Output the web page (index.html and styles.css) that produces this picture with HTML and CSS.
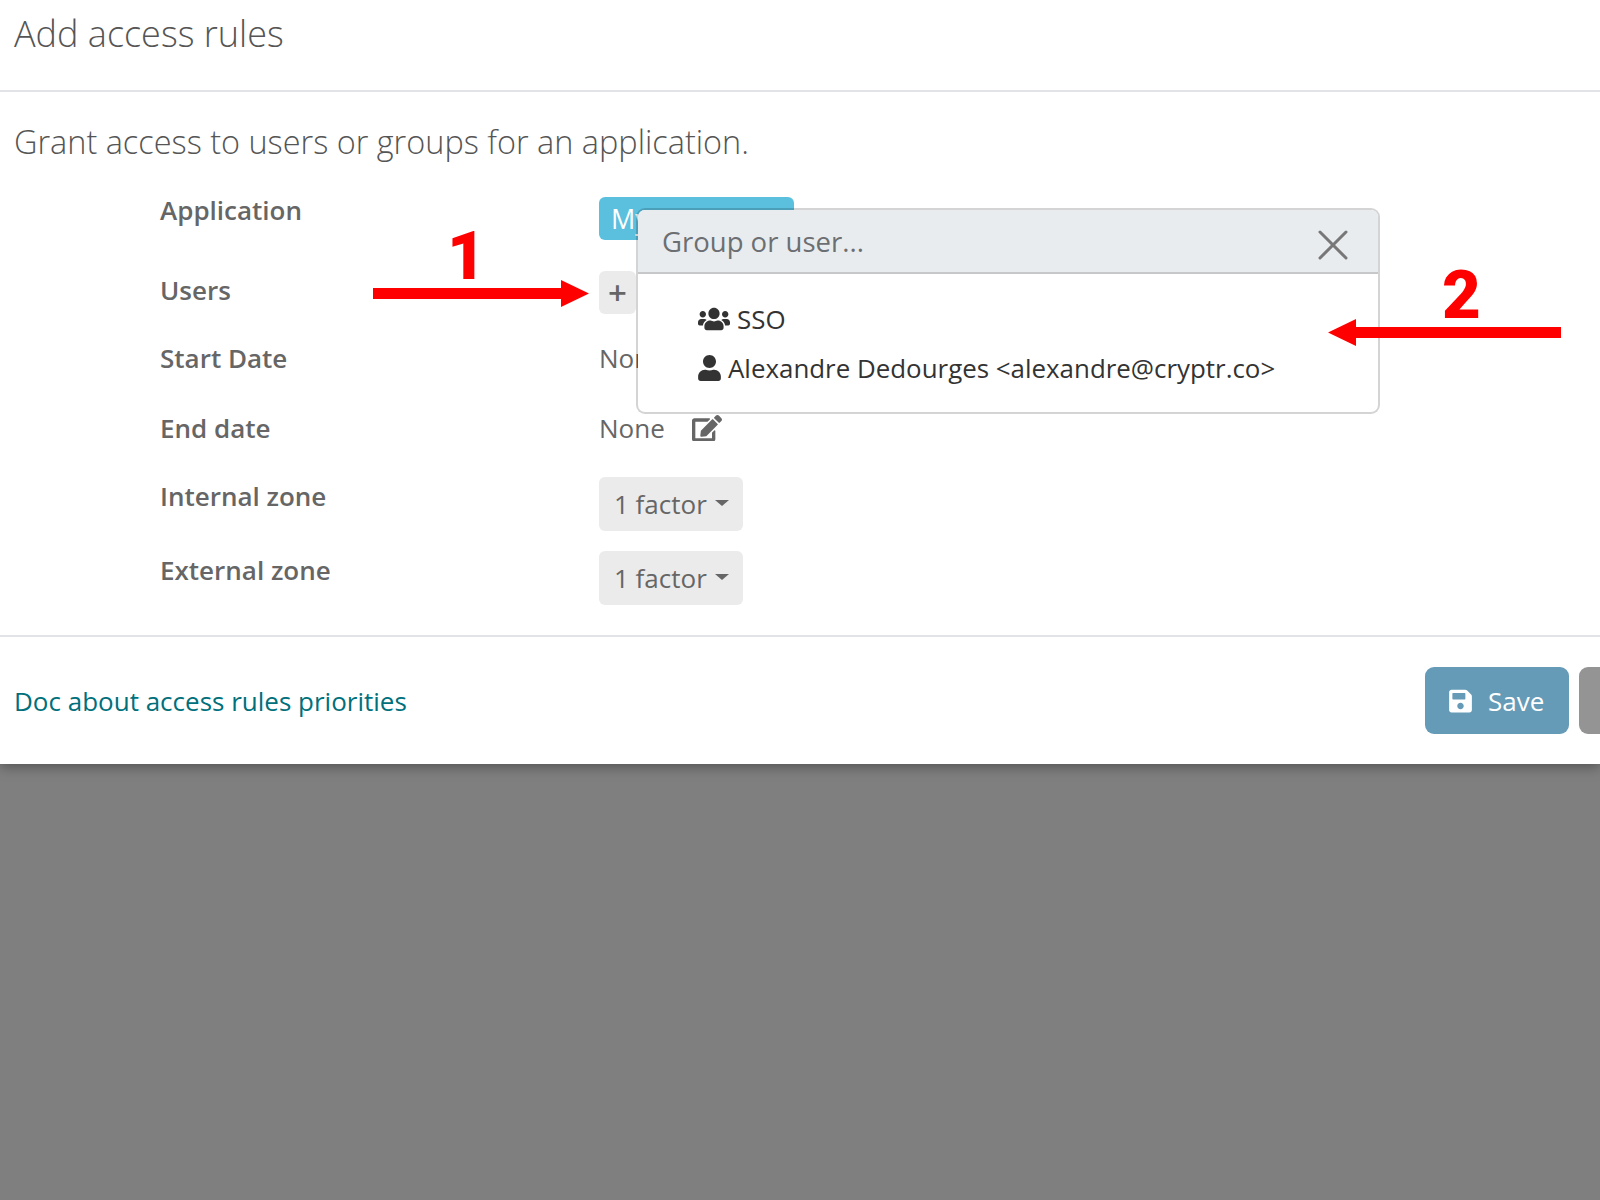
FILE: index.html
```html
<!DOCTYPE html>
<html lang="en">
<head>
<meta charset="utf-8">
<title>Add access rules</title>
<link rel="stylesheet" href="styles.css">
</head>
<body>
<div class="modal">
  <header class="modal-header"><h1 class="modal-title">Add access rules</h1></header>
  <main class="modal-body">
    <p class="intro">Grant access to users or groups for an application.</p>
    <div class="form">
      <div class="label label-top">Application</div>
      <div><span class="tag">My app</span></div>
      <div class="label">Users</div>
      <div><button class="btn btn-plus" aria-label="Add">+</button></div>
      <div class="label">Start Date</div>
      <div class="value">None</div>
      <div class="label">End date</div>
      <div class="value">None
        <svg class="icon-edit" viewBox="0 0 576 512"><path fill="currentColor" d="M402.6 83.2l90.2 90.2c3.8 3.8 3.8 10 0 13.8L274.4 405.6l-92.8 10.3c-12.4 1.4-22.9-9.1-21.5-21.5l10.3-92.8L388.8 83.2c3.8-3.8 10-3.8 13.8 0zm162-22.9l-48.8-48.8c-15.2-15.2-39.9-15.2-55.2 0l-35.4 35.4c-3.8 3.8-3.8 10 0 13.8l90.2 90.2c3.8 3.8 10 3.8 13.8 0l35.4-35.4c15.2-15.3 15.2-40 0-55.2zM384 346.2V448H64V128h229.8c3.2 0 6.2-1.3 8.5-3.5l40-40c7.6-7.6 2.2-20.5-8.5-20.5H48C21.5 64 0 85.5 0 112v352c0 26.5 21.5 48 48 48h352c26.5 0 48-21.5 48-48V306.2c0-10.7-12.9-16-20.5-8.5l-40 40c-2.2 2.3-3.5 5.3-3.5 8.5z"/></svg>
      </div>
      <div class="label">Internal zone</div>
      <div><button class="btn btn-factor">1 factor<span class="caret"></span></button></div>
      <div class="label">External zone</div>
      <div><button class="btn btn-factor">1 factor<span class="caret"></span></button></div>
    </div>
  </main>
  <footer class="modal-footer">
    <a class="doc-link" href="#">Doc about access rules priorities</a>
    <button class="btn-save">
      <svg class="icon-save" viewBox="0 0 448 512"><path fill="currentColor" d="M433.941 129.941l-83.882-83.882A48 48 0 0 0 316.118 32H48C21.49 32 0 53.49 0 80v352c0 26.51 21.49 48 48 48h352c26.51 0 48-21.49 48-48V163.882a48 48 0 0 0-14.059-33.941zM224 416c-35.346 0-64-28.654-64-64 0-35.346 28.654-64 64-64s64 28.654 64 64c0 35.346-28.654 64-64 64zm96-304.52V212c0 6.627-5.373 12-12 12H76c-6.627 0-12-5.373-12-12V108c0-6.627 5.373-12 12-12h228.52c3.183 0 6.235 1.264 8.485 3.515l3.48 3.48A11.996 11.996 0 0 1 320 111.48z"/></svg>
      Save
    </button>
    <button class="btn-cancel" aria-label="Cancel"></button>
  </footer>
</div>

<div class="popover">
  <div class="popover-head">
    <span class="placeholder">Group or user...</span>
    <svg class="icon-close" viewBox="0 0 30 30"><path d="M2 2 L28 28 M28 2 L2 28" stroke="currentColor" stroke-width="3" stroke-linecap="round" fill="none"/></svg>
  </div>
  <ul class="results">
    <li class="result">
      <svg class="icon-users" viewBox="0 0 640 512"><path fill="currentColor" d="M96 224c35.3 0 64-28.7 64-64s-28.7-64-64-64-64 28.7-64 64 28.7 64 64 64zm448 0c35.3 0 64-28.7 64-64s-28.7-64-64-64-64 28.7-64 64 28.7 64 64 64zm32 32h-64c-17.6 0-33.5 7.1-45.1 18.6 40.3 22.1 68.9 62 75.1 109.4h66c17.7 0 32-14.3 32-32v-32c0-35.3-28.7-64-64-64zm-256 0c61.9 0 112-50.1 112-112S381.9 32 320 32 208 82.1 208 144s50.1 112 112 112zm76.8 32h-8.3c-20.8 10-43.9 16-68.5 16s-47.6-6-68.5-16h-8.3C179.6 288 128 339.6 128 403.2V432c0 26.5 21.5 48 48 48h288c26.5 0 48-21.5 48-48v-28.8c0-63.6-51.6-115.2-115.2-115.2zm-223.7-13.4C161.5 263.1 145.6 256 128 256H64c-35.3 0-64 28.7-64 64v32c0 17.7 14.3 32 32 32h65.9c6.3-47.4 34.9-87.3 75.2-109.4z"/></svg>
      SSO
    </li>
    <li class="result">
      <svg class="icon-user" viewBox="0 0 448 512"><path fill="currentColor" d="M224 256c70.7 0 128-57.3 128-128S294.7 0 224 0 96 57.3 96 128s57.3 128 128 128zm89.6 32h-16.7c-22.2 10.2-46.9 16-72.9 16s-50.6-5.8-72.9-16h-16.7C60.2 288 0 348.2 0 422.4V464c0 26.5 21.5 48 48 48h352c26.5 0 48-21.5 48-48v-41.6c0-74.2-60.2-134.4-134.4-134.4z"/></svg>
      Alexandre Dedourges &lt;alexandre@cryptr.co&gt;
    </li>
  </ul>
</div>

<div class="note note-one">
  <span class="note-num">1</span>
  <svg class="arrow" viewBox="0 0 216 27"><path fill="#ff0000" d="M0 8H188V0L216 13.5 188 27V19H0Z"/></svg>
</div>
<div class="note note-two">
  <span class="note-num">2</span>
  <svg class="arrow" viewBox="0 0 233 27"><path fill="#ff0000" d="M233 8H28V0L0 13.5 28 27V19H233Z"/></svg>
</div>
</body>
</html>
```
FILE: styles.css
```css
* { box-sizing: border-box; }
html, body { margin: 0; height: 100%; }
body {
  background: #7f7f7f;
  font-family: "Open Sans", sans-serif;
  color: #666;
  overflow: hidden;
  position: relative;
}
.modal {
  height: 764px;
  background: #fff;
  display: flex;
  flex-direction: column;
  box-shadow: 0 3px 12px rgba(0,0,0,.35);
}
.modal-header {
  height: 92px;
  border-bottom: 2px solid #e1e3e6;
  padding: 12px 14px 0;
}
.modal-title {
  margin: 0;
  font-size: 36px;
  font-weight: 300;
  line-height: 44px;
  color: #555;
}
.modal-body { flex: 1; padding: 0 14px; }
.intro {
  margin: 28px 0 0;
  font-size: 32.45px;
  font-weight: 300;
  line-height: 44px;
  color: #555;
}
.form {
  margin-top: 33px;
  padding-left: 146px;
  display: grid;
  grid-template-columns: 439px 1fr;
  grid-template-rows: 74px 68px 70px 68px 74px 53px;
}
.label {
  font-size: 26px;
  font-weight: 600;
  line-height: 38px;
  color: #666;
}
.label-top { line-height: 26px; }
.value {
  height: 38px;
  font-size: 26px;
  line-height: 38px;
  display: flex;
  align-items: center;
  gap: 27px;
}
.tag {
  display: block;
  width: 195px;
  height: 43px;
  padding: 0 12px;
  background: #5bc0de;
  border-radius: 6px;
  color: #fff;
  font-size: 27px;
  line-height: 43px;
  white-space: nowrap;
}
.btn {
  border: 0;
  background: #ebebeb;
  color: #666;
  font-family: inherit;
  border-radius: 6px;
  padding: 0;
}
.btn-plus {
  display: block;
  width: 37px;
  height: 43px;
  font-size: 33px;
  font-weight: 600;
  line-height: 41px;
}
.btn-factor {
  display: flex;
  align-items: center;
  width: 144px;
  height: 54px;
  padding-left: 15px;
  font-size: 26px;
}
.caret {
  margin-left: 8px;
  margin-top: -2px;
  border-top: 6.5px solid #666;
  border-left: 7px solid transparent;
  border-right: 7px solid transparent;
}
.icon-edit { width: 30px; height: 26.7px; margin-top: 0; }
.modal-footer {
  height: 129px;
  border-top: 2px solid #e1e3e6;
  padding: 30px 0 0 14px;
  display: flex;
  align-items: flex-start;
  overflow: hidden;
}
.doc-link {
  flex: 0 0 1411px;
  font-size: 26px;
  line-height: 69px;
  color: #00707c;
  text-decoration: none;
}
.btn-save {
  flex: 0 0 144px;
  height: 67px;
  display: flex;
  align-items: center;
  gap: 16px;
  padding-left: 24px;
  border: 0;
  border-radius: 9px;
  background: #659bb7;
  color: #fff;
  font-family: inherit;
  font-size: 26px;
}
.icon-save { width: 23px; height: 26px; }
.btn-cancel {
  flex: 0 0 100px;
  height: 67px;
  margin-left: 10px;
  border: 0;
  border-radius: 9px;
  background: #949494;
}
.popover {
  position: absolute;
  left: 636px;
  top: 208px;
  width: 744px;
  height: 206px;
  background: #fff;
  background-clip: padding-box;
  border: 2px solid rgba(0,0,0,.17);
  border-radius: 9px;
}
.popover-head {
  height: 64px;
  padding: 0 30px 0 24px;
  display: flex;
  align-items: center;
  justify-content: space-between;
  background: #e9ecef;
  border-bottom: 2px solid #c6c8ca;
  border-radius: 7px 7px 0 0;
}
.placeholder { font-size: 27.5px; font-weight: 400; color: #6c6f72; }
.icon-close { width: 30px; height: 30px; color: #777; margin-top: 8px; }
.results { list-style: none; margin: 0; padding: 21px 0 0 60px; }
.result {
  display: flex;
  align-items: center;
  gap: 7px;
  height: 48.5px;
  font-size: 25.9px;
  color: #333;
}
.icon-users { width: 32px; height: 26px; }
.icon-user { width: 23px; height: 26px; }
.note { position: absolute; }
.note-num {
  position: absolute;
  font-family: Roboto, "Liberation Sans", sans-serif;
  font-weight: 900;
  font-size: 67px;
  line-height: 67px;
  color: #ff0000;
}
.arrow { display: block; }
.note-one { left: 373px; top: 280px; width: 216px; height: 27px; }
.note-one .arrow { width: 216px; height: 27px; }
.note-one .note-num { left: 74px; top: -57px; }
.note-two { left: 1328px; top: 319px; width: 233px; height: 27px; }
.note-two .arrow { width: 233px; height: 27px; }
.note-two .note-num { left: 114px; top: -57px; }
```
